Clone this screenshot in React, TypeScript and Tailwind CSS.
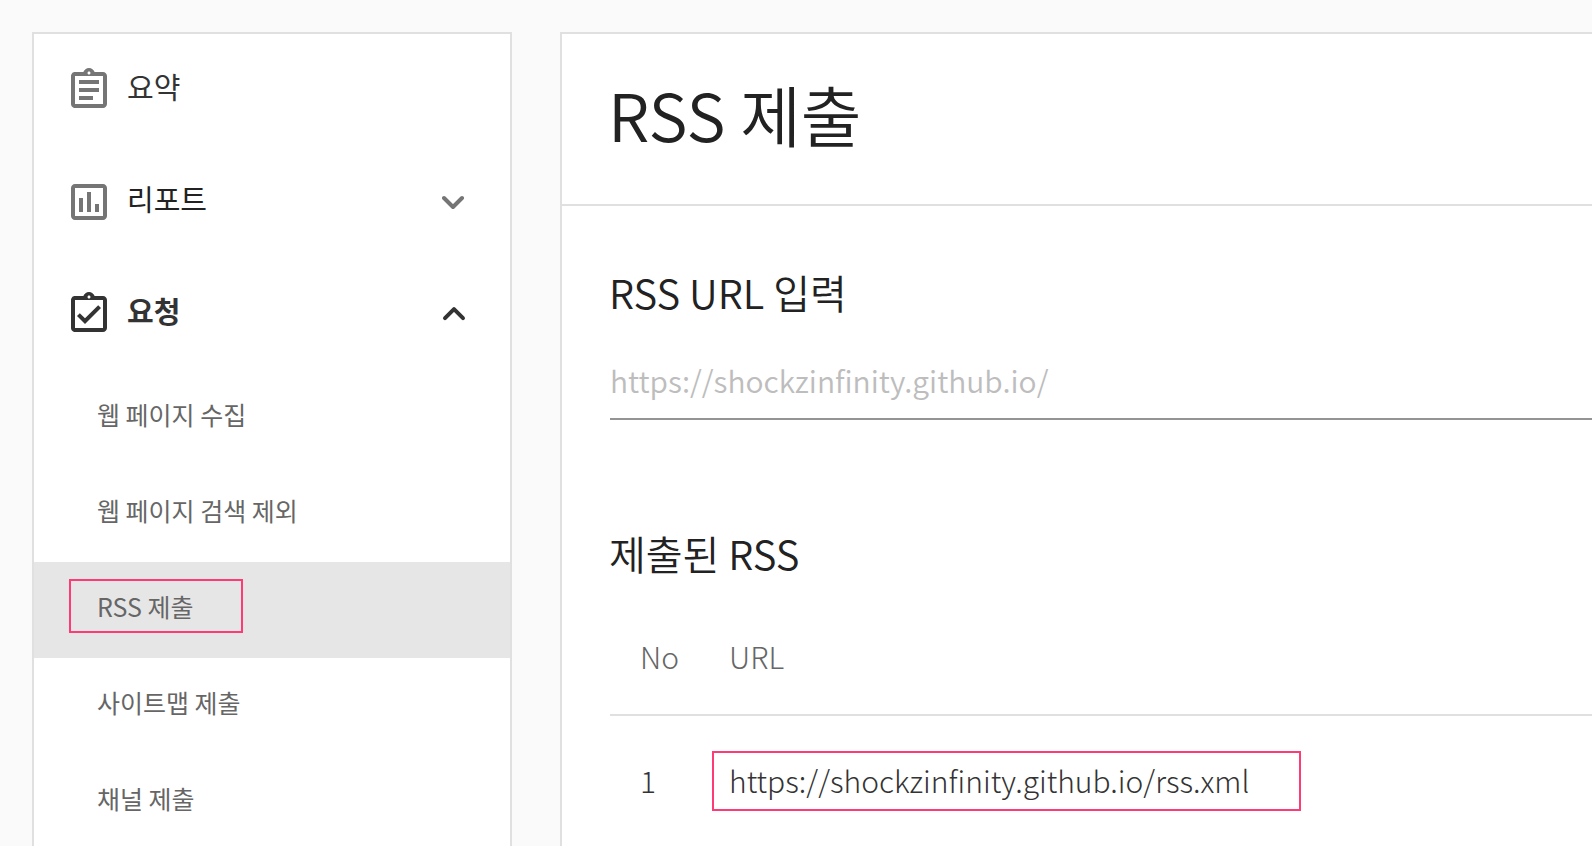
import type { ReactNode } from 'react';
import {
  MdOutlineAssessment,
  MdOutlineAssignment,
  MdOutlineAssignmentTurnedIn,
} from 'react-icons/md';

const requestItems = [
  { label: '웹 페이지 수집' },
  { label: '웹 페이지 검색 제외' },
  { label: 'RSS 제출', active: true },
  { label: '사이트맵 제출' },
  { label: '채널 제출' },
];

const submissions = [{ no: 1, url: 'https://shockzinfinity.github.io/rss.xml' }];

function Chevron({ up = false }: { up?: boolean }) {
  return (
    <svg
      viewBox="0 0 24 16"
      aria-hidden="true"
      className="ml-auto h-4 w-6 shrink-0"
      fill="none"
      stroke="currentColor"
      strokeWidth="4"
      strokeLinecap="round"
      strokeLinejoin="round"
    >
      <path d={up ? 'M3 12.2 12 3.2 21 12.2' : 'M2 4 11 13 20 4'} />
    </svg>
  );
}

function MenuButton({
  icon,
  label,
  expanded,
}: {
  icon: ReactNode;
  label: string;
  expanded: boolean;
}) {
  return (
    <button
      type="button"
      aria-expanded={expanded}
      className={
        expanded
          ? 'flex h-28 w-full items-center gap-3.5 pr-11 pl-[31px] text-left text-[#333]'
          : 'flex h-28 w-full items-center gap-3.5 pr-11 pl-[31px] text-left text-[#757575]'
      }
    >
      {icon}
      <span className={expanded ? 'pb-2 font-bold text-[#333]' : 'pb-2 text-[#222]'}>
        {label}
      </span>
      <Chevron up={expanded} />
    </button>
  );
}

function Sidebar() {
  return (
    <aside className="w-[480px] shrink-0 border-2 border-b-0 border-[#e0e0e0] bg-white">
      <nav className="text-[29px] leading-10">
        <a
          href="#summary"
          className="flex h-28 items-center gap-3.5 pr-11 pl-[31px] text-[#757575]"
        >
          <MdOutlineAssignment className="size-12 shrink-0" />
          <span className="pb-2 text-[#333]">요약</span>
        </a>
        <MenuButton
          icon={<MdOutlineAssessment className="size-12 shrink-0" />}
          label="리포트"
          expanded={false}
        />
        <MenuButton
          icon={<MdOutlineAssignmentTurnedIn className="size-12 shrink-0" />}
          label="요청"
          expanded
        />
        <ul className="text-[25px] text-[#666]">
          {requestItems.map((item) => (
            <li key={item.label}>
              <a
                href="#request"
                aria-current={item.active ? 'page' : undefined}
                className={
                  item.active
                    ? 'flex h-24 items-center bg-[#e6e6e6] px-[35px] pb-2'
                    : 'flex h-24 items-center px-[63px] pb-2'
                }
              >
                {item.active ? (
                  <span className="flex h-[54px] w-[174px] items-center border-2 border-[#ff3b77] pl-[26px]">
                    {item.label}
                  </span>
                ) : (
                  item.label
                )}
              </a>
            </li>
          ))}
        </ul>
      </nav>
    </aside>
  );
}

export default function App() {
  return (
    <div className="flex h-screen gap-12 overflow-hidden bg-[#fafafa] pt-8 pl-8 font-['Noto_Sans_CJK_KR','Noto_Sans',sans-serif] text-[#222]">
      <Sidebar />
      <main className="min-w-0 grow border-t-2 border-l-2 border-[#e0e0e0] bg-white">
        <header className="flex h-[172px] items-center border-b-2 border-[#e0e0e0] pb-3 pl-[46px]">
          <h1 className="text-[66px] leading-[84px] font-[350]">RSS 제출</h1>
        </header>
        <div className="pt-14 pl-12">
          <label htmlFor="rss-url" className="-ml-px block text-[40px] leading-[60px] font-[350]">
            RSS URL 입력
          </label>
          <input
            id="rss-url"
            type="url"
            placeholder="https://shockzinfinity.github.io/"
            className="mt-6 block h-[74px] w-full border-b-2 border-[#949494] bg-transparent pb-1 text-[30px] font-[350] outline-none placeholder:text-[#bdbdbd] placeholder:opacity-100"
          />
          <h2 className="-ml-px mt-[103px] text-[40px] leading-[60px] font-[350]">제출된 RSS</h2>
          <table className="mt-5 w-full border-collapse text-left text-[30px] leading-10 font-light">
            <thead>
              <tr className="h-28 border-b-2 border-[#e0e0e0] text-[#666]">
                <th scope="col" className="w-[102px] pb-1.5 pl-[30px] font-light">
                  No
                </th>
                <th scope="col" className="pb-1.5 pl-[17px] font-light">
                  URL
                </th>
              </tr>
            </thead>
            <tbody>
              {submissions.map((row) => (
                <tr key={row.no} className="h-[130px] text-[#333]">
                  <td className="pb-0.5 pl-[30px]">{row.no}</td>
                  <td>
                    <a
                      href={row.url}
                      className="flex h-[60px] w-[589px] items-center border-2 border-[#ff3b77] pb-0.5 pl-[15px]"
                    >
                      {row.url}
                    </a>
                  </td>
                </tr>
              ))}
            </tbody>
          </table>
        </div>
      </main>
    </div>
  );
}
